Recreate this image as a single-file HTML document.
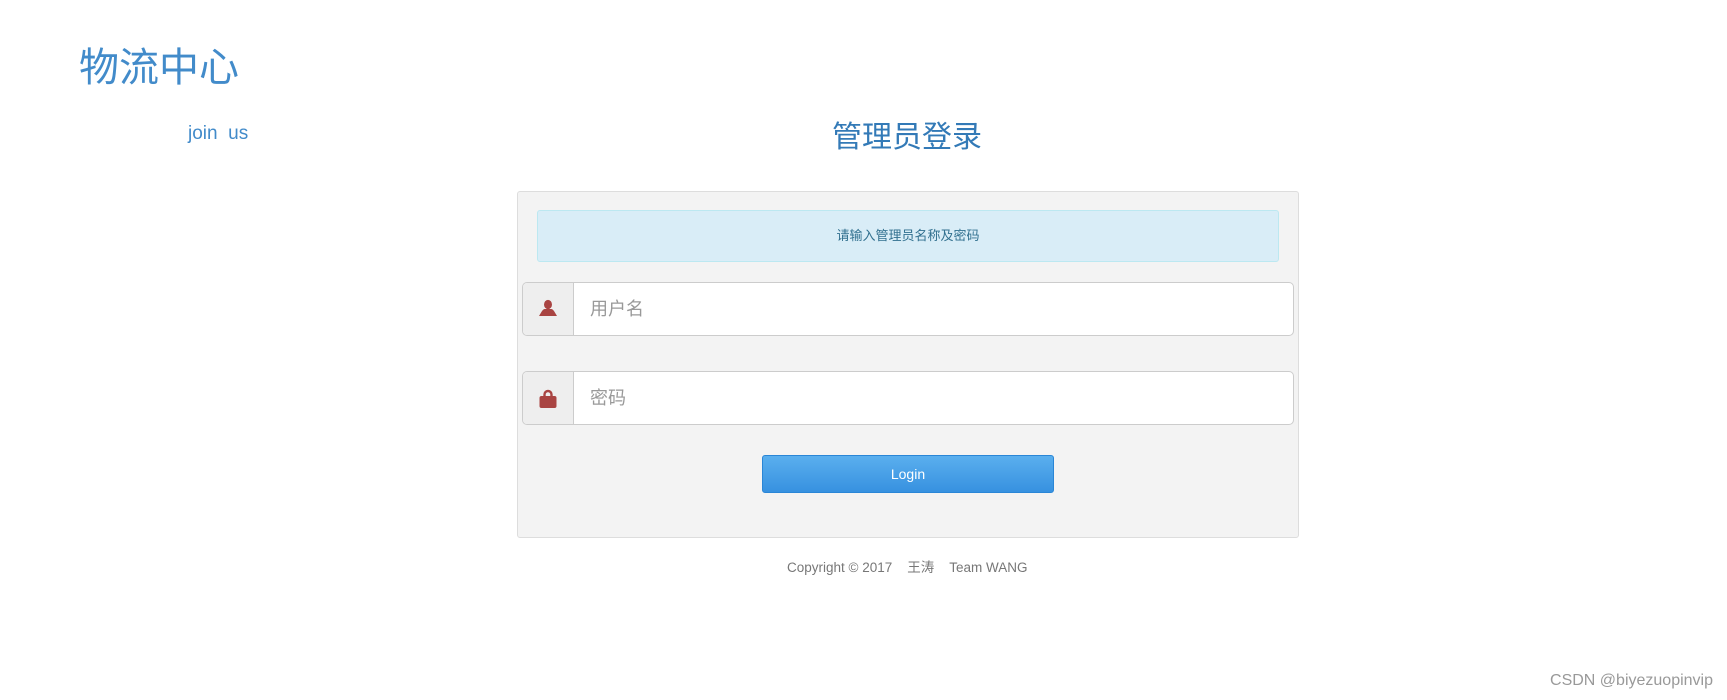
<!DOCTYPE html>
<html><head><meta charset="utf-8"><style>
*{box-sizing:border-box;margin:0;padding:0}
body{width:1727px;height:700px;background:#fff;position:relative;font-family:"Liberation Sans","Noto Sans CJK SC",sans-serif;overflow:hidden}
.a{position:absolute;white-space:nowrap}
.panel{left:517px;top:191px;width:782px;height:347px;background:#f3f3f3;border:1px solid #ddd;border-radius:3px}
.alert{left:537px;top:210px;width:742px;height:52px;background:#d9edf7;border:1px solid #bce8f1;border-radius:3px;color:#31708f;font-size:13px;text-align:center;line-height:50px}
.inp{left:522px;width:772px;height:54px;border:1px solid #ccc;border-radius:5px;background:#fff;overflow:hidden}
.add{position:absolute;left:0;top:0;width:51px;height:100%;background:#eee;border-right:1px solid #ccc}
.ph{position:absolute;left:67px;top:0;line-height:52px;font-size:18px;color:#999}
.btn{left:762px;top:455px;width:292px;height:38px;border:1px solid #2a86d6;border-radius:3px;background:linear-gradient(#5aafee,#3791e0);color:#fff;font-size:14px;text-align:center;line-height:36px}
</style></head><body>
<div class="a" style="left:79px;top:44px;font-size:40px;color:#428bca;line-height:48px">物流中心</div>
<div class="a" style="left:188px;top:122px;font-size:19px;color:#428bca;line-height:24px">join&nbsp; us</div>
<div class="a" style="left:832px;top:119px;font-size:30px;color:#337ab7;line-height:38px">管理员登录</div>
<div class="a panel"></div>
<div class="a alert">请输入管理员名称及密码</div>
<div class="a inp" style="top:282px"><div class="add"><svg width="51" height="52" viewBox="0 0 51 52"><ellipse cx="25" cy="21.5" rx="4" ry="4.6" fill="#a94442"/><path fill="#a94442" d="M22 26h6c1.5 0 2 1 3 2l3 5H16l3-5c1-1 1.5-2 3-2z"/></svg></div><div class="ph">用户名</div></div>
<div class="a inp" style="top:371px"><div class="add"><svg width="51" height="52" viewBox="0 0 51 52"><path fill="none" stroke="#a94442" stroke-width="2.4" d="M21.5 25v-2.5a3.5 3.5 0 0 1 7 0V25"/><rect x="16.5" y="24" width="17" height="12" rx="2" fill="#a94442"/></svg></div><div class="ph">密码</div></div>
<div class="a btn">Login</div>
<div class="a" style="left:787px;top:560px;font-size:13.5px;color:#777;line-height:16px">Copyright © 2017 &nbsp;&nbsp;&nbsp;王涛 &nbsp;&nbsp;&nbsp;Team WANG</div>
<div class="a" style="right:14px;top:671px;font-size:16px;color:#999;line-height:20px">CSDN @biyezuopinvip</div>
</body></html>
